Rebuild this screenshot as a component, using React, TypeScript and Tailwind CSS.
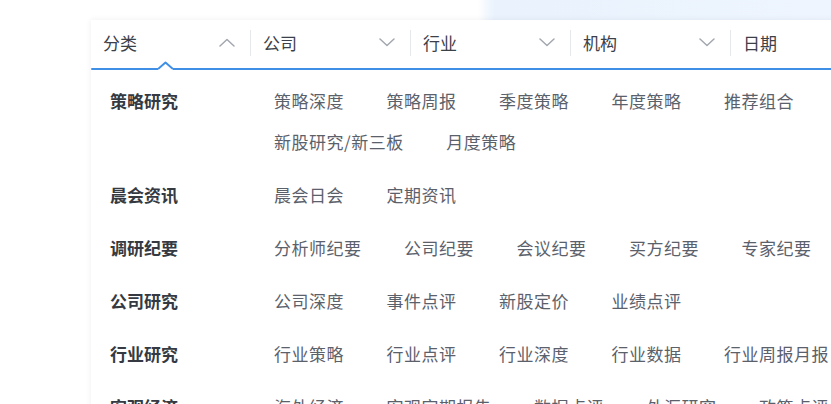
const filters = [
  { label: "分类", open: true },
  { label: "公司", open: false },
  { label: "行业", open: false },
  { label: "机构", open: false },
  { label: "日期", open: false },
];

const groups = [
  {
    title: "策略研究",
    items: ["策略深度", "策略周报", "季度策略", "年度策略", "推荐组合", "新股研究/新三板", "月度策略"],
  },
  { title: "晨会资讯", items: ["晨会日会", "定期资讯"] },
  { title: "调研纪要", items: ["分析师纪要", "公司纪要", "会议纪要", "买方纪要", "专家纪要"] },
  { title: "公司研究", items: ["公司深度", "事件点评", "新股定价", "业绩点评"] },
  { title: "行业研究", items: ["行业策略", "行业点评", "行业深度", "行业数据", "行业周报月报"] },
  { title: "宏观经济", items: ["海外经济", "宏观定期报告", "数据点评", "外汇研究", "政策点评"] },
];

function Chevron({ up }: { up: boolean }) {
  return (
    <svg width="16" height="9" viewBox="0 0 16 9" fill="none">
      <polyline
        points={up ? "1,8 8,1.5 15,8" : "1,1 8,7.5 15,1"}
        stroke="#a3a7ae"
        strokeWidth="1.5"
        strokeLinecap="round"
        strokeLinejoin="round"
      />
    </svg>
  );
}

export default function App() {
  return (
    <div
      className="relative h-[404px] w-[831px] overflow-hidden bg-[linear-gradient(90deg,#ffffff_0,#ffffff_57.5%,#e9f2fd_59.5%,#eef5fe_100%)]"
      style={{ fontFamily: '"Noto Sans CJK SC", "Noto Sans", sans-serif' }}
    >
      <div className="ml-[91px] mt-[20px] w-[820px] bg-white shadow-[0_0_6px_rgba(0,0,0,0.07)]">
        <div className="flex h-[48px] items-center pb-[3px]">
          {filters.map((f, i) => (
            <div key={f.label} className="flex items-center">
              <div className="flex w-[159px] items-center justify-between pl-[12px] pr-[15px]">
                <span className="text-[17px] text-[#3c4048]">{f.label}</span>
                <Chevron up={f.open} />
              </div>
              {i < filters.length - 1 && <div className="h-[26px] w-px bg-[#e6e8eb]" />}
            </div>
          ))}
        </div>

        <div className="relative h-[2px] rounded-l-full bg-[#3f8fe6]">
          <svg className="absolute left-[67px] top-[-7px]" width="15" height="9" viewBox="0 0 15 9" fill="none">
            <polygon points="0,9 0,7 7.5,1 15,7 15,9" fill="#ffffff" />
            <polyline points="0,8 7.5,1.5 15,8" stroke="#3f8fe6" strokeWidth="2" strokeLinejoin="round" />
          </svg>
        </div>

        <div className="pt-[4px] pl-[19px]">
          {groups.map((g) => (
            <div key={g.title} className="flex py-[6px]">
              <div className="w-[164px] shrink-0 text-[17px] font-bold leading-[41px] text-[#353a42]">
                {g.title}
              </div>
              <div className="flex w-[600px] flex-wrap gap-x-[42.5px]">
                {g.items.map((it) => (
                  <span
                    key={it}
                    className="whitespace-nowrap text-[17px] leading-[41px] tracking-[0.5px] text-[#5b616b]"
                  >
                    {it}
                  </span>
                ))}
              </div>
            </div>
          ))}
        </div>
      </div>
    </div>
  );
}
